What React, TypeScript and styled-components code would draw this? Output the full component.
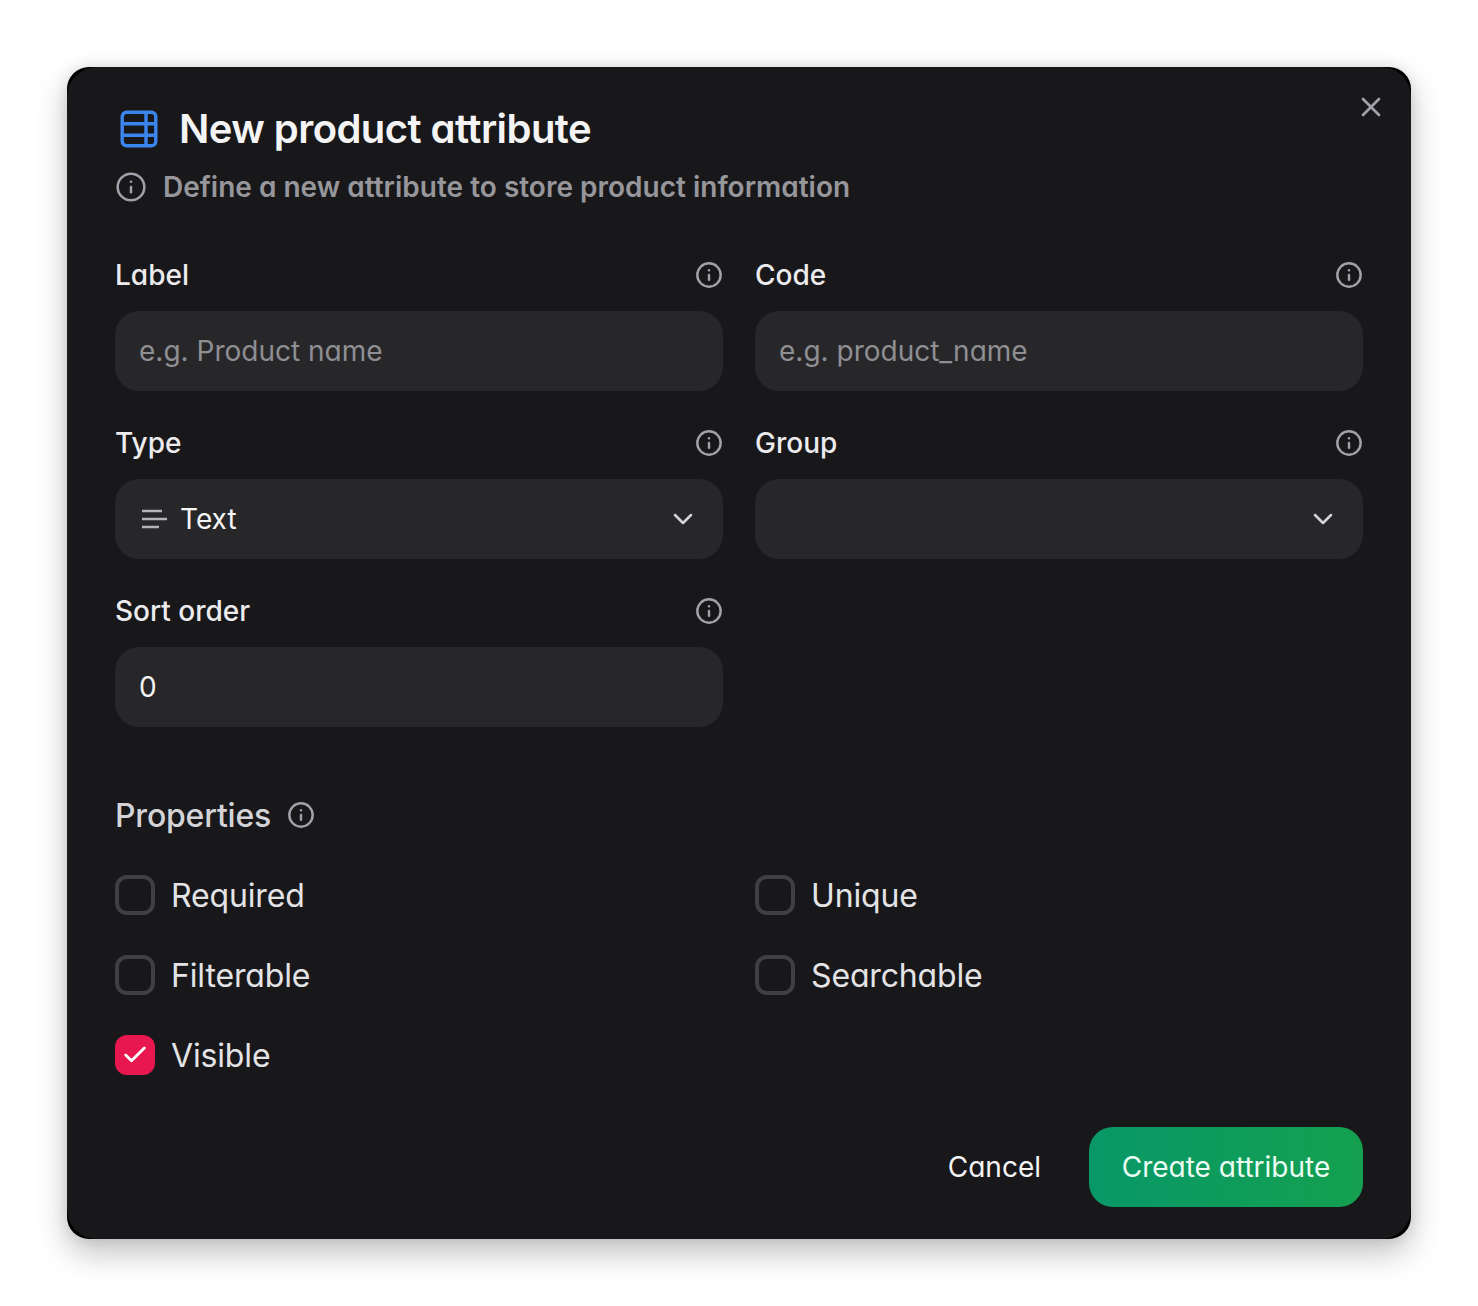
import { ChevronDown, Check, Info, X } from "lucide-react";
import styled, { createGlobalStyle } from "styled-components";

const GlobalStyle = createGlobalStyle`
  html, body {
    margin: 0;
    background: #fff;
  }
  body {
    font-family: Inter, "Noto Sans", sans-serif;
    font-feature-settings: "cv11" 1;
    -webkit-font-smoothing: antialiased;
  }
`;

const TableIcon = () => (
  <svg width="38" height="38" viewBox="0 0 38 38" fill="none" stroke="#3b86ee" strokeWidth="3.4">
    <rect x="2.2" y="2.2" width="33.6" height="33.6" rx="4.5" />
    <path d="M2.2 13.8h33.6M2.2 25.2h33.6M26 2.2v33.6" />
  </svg>
);

const LinesIcon = () => (
  <svg width="26" height="20" viewBox="0 0 26 20" fill="none" stroke="#b4b4b8" strokeWidth="2.6">
    <path d="M1 2h20M1 10h25M1 18h17" />
  </svg>
);

const Field = ({ label, children }: { label: string; children: React.ReactNode }) => (
  <div>
    <LabelRow>
      <span>{label}</span>
      <HintIcon size={28} strokeWidth={2.1} />
    </LabelRow>
    {children}
  </div>
);

const Option = ({ label, checked }: { label: string; checked?: boolean }) => (
  <OptionRow>
    <CheckBox $checked={checked}>{checked && <Check size={28} strokeWidth={2.4} color="#fff" />}</CheckBox>
    <span>{label}</span>
  </OptionRow>
);

export default function App() {
  return (
    <Page>
      <GlobalStyle />
      <Dialog>
        <Panel>
          <CloseButton>
            <X size={32} strokeWidth={2} />
          </CloseButton>
          <TitleRow>
            <TableIcon />
            <Title>New product attribute</Title>
          </TitleRow>
          <Subtitle>
            <Info size={32} strokeWidth={1.9} />
            <span>Define a new attribute to store product information</span>
          </Subtitle>

          <FormGrid>
            <Field label="Label">
              <Control $muted>e.g. Product name</Control>
            </Field>
            <Field label="Code">
              <Control $muted>e.g. product_name</Control>
            </Field>
            <Field label="Type">
              <Control>
                <SelectValue>
                  <LinesIcon />
                  <span>Text</span>
                </SelectValue>
                <ChevronDown size={32} strokeWidth={1.9} />
              </Control>
            </Field>
            <Field label="Group">
              <Control>
                <span />
                <ChevronDown size={32} strokeWidth={1.9} />
              </Control>
            </Field>
            <Field label="Sort order">
              <Control>0</Control>
            </Field>
          </FormGrid>

          <PropertiesHead>
            <span>Properties</span>
            <HintIcon size={28} strokeWidth={2.1} />
          </PropertiesHead>
          <OptionsGrid>
            <Option label="Required" />
            <Option label="Unique" />
            <Option label="Filterable" />
            <Option label="Searchable" />
            <Option label="Visible" checked />
          </OptionsGrid>

          <Footer>
            <CancelButton>Cancel</CancelButton>
            <CreateButton>Create attribute</CreateButton>
          </Footer>
        </Panel>
      </Dialog>
    </Page>
  );
}

const Page = styled.main`
  box-sizing: border-box;
  width: 1478px;
  height: 1306px;
  padding: 67px;
  overflow: hidden;
  background: #fff;
`;

const Dialog = styled.div`
  width: 1344px;
  height: 1172px;
  border-radius: 22px;
  background: #000;
  box-shadow: 0 14px 32px rgba(0, 0, 0, 0.24), 0 0 14px rgba(0, 0, 0, 0.1);
`;

const Panel = styled.section`
  position: relative;
  box-sizing: border-box;
  height: 100%;
  padding: 40px 48px 32px;
  border-radius: 30px;
  background: #18181b;
  color: #f4f4f5;
`;

const CloseButton = styled.button`
  position: absolute;
  top: 24px;
  right: 24px;
  display: flex;
  padding: 0;
  border: none;
  background: none;
  color: #a1a1aa;
`;

const TitleRow = styled.div`
  display: flex;
  align-items: center;
  gap: 21px;
  height: 44px;
  padding-left: 5px;
`;

const Title = styled.h1`
  margin: 0;
  font-size: 40px;
  line-height: 44px;
  font-weight: 600;
  letter-spacing: -0.56px;
  color: #f4f4f5;
`;

const Subtitle = styled.p`
  display: flex;
  align-items: center;
  gap: 16px;
  margin: 16px 0 0;
  height: 40px;
  font-size: 28px;
  font-weight: 600;
  color: #96969b;

  svg {
    color: #a1a1aa;
  }
`;

const FormGrid = styled.div`
  display: grid;
  grid-template-columns: 608px 608px;
  column-gap: 32px;
  row-gap: 32px;
  margin-top: 48px;
`;

const LabelRow = styled.div`
  display: flex;
  align-items: center;
  justify-content: space-between;
  height: 40px;
  margin-bottom: 16px;
  font-size: 28px;
  font-weight: 500;
  color: #ececee;
`;

const HintIcon = styled(Info)`
  color: #a1a1aa;
  flex-shrink: 0;
`;

const Control = styled.div<{ $muted?: boolean }>`
  display: flex;
  align-items: center;
  justify-content: space-between;
  box-sizing: border-box;
  height: 80px;
  padding: 0 24px;
  border-radius: 24px;
  background: #27272a;
  font-size: 28px;
  color: ${(p) => (p.$muted ? "#8e8e93" : "#f4f4f5")};

  > svg {
    color: #d4d4d8;
  }
`;

const SelectValue = styled.div`
  display: flex;
  align-items: center;
  gap: 13px;
  padding-left: 2px;
`;

const PropertiesHead = styled.div`
  display: flex;
  align-items: center;
  gap: 16px;
  height: 48px;
  margin-top: 64px;
  font-size: 32px;
  font-weight: 500;
  letter-spacing: -0.2px;
  color: #d4d4d8;
`;

const OptionsGrid = styled.div`
  display: grid;
  grid-template-columns: 608px 608px;
  column-gap: 32px;
  row-gap: 40px;
  margin-top: 36px;
`;

const OptionRow = styled.label`
  display: flex;
  align-items: center;
  gap: 16px;
  height: 40px;
  font-size: 32px;
  letter-spacing: -0.15px;
  color: #e4e4e7;
`;

const CheckBox = styled.span<{ $checked?: boolean }>`
  display: flex;
  align-items: center;
  justify-content: center;
  box-sizing: border-box;
  width: 40px;
  height: 40px;
  border-radius: 12px;
  border: ${(p) => (p.$checked ? "none" : "4px solid #3f3f46")};
  background: ${(p) => (p.$checked ? "#e8174f" : "transparent")};
`;

const Footer = styled.div`
  display: flex;
  justify-content: flex-end;
  align-items: center;
  gap: 48px;
  margin-top: 52px;
`;

const CancelButton = styled.button`
  padding: 0;
  border: none;
  background: none;
  font: inherit;
  font-size: 28px;
  color: #f4f4f5;
`;

const CreateButton = styled.button`
  width: 274px;
  height: 80px;
  padding: 0;
  border: none;
  border-radius: 24px;
  background: linear-gradient(90deg, #089868, #14a04f);
  font: inherit;
  font-size: 28px;
  color: #ecfdf5;
`;
